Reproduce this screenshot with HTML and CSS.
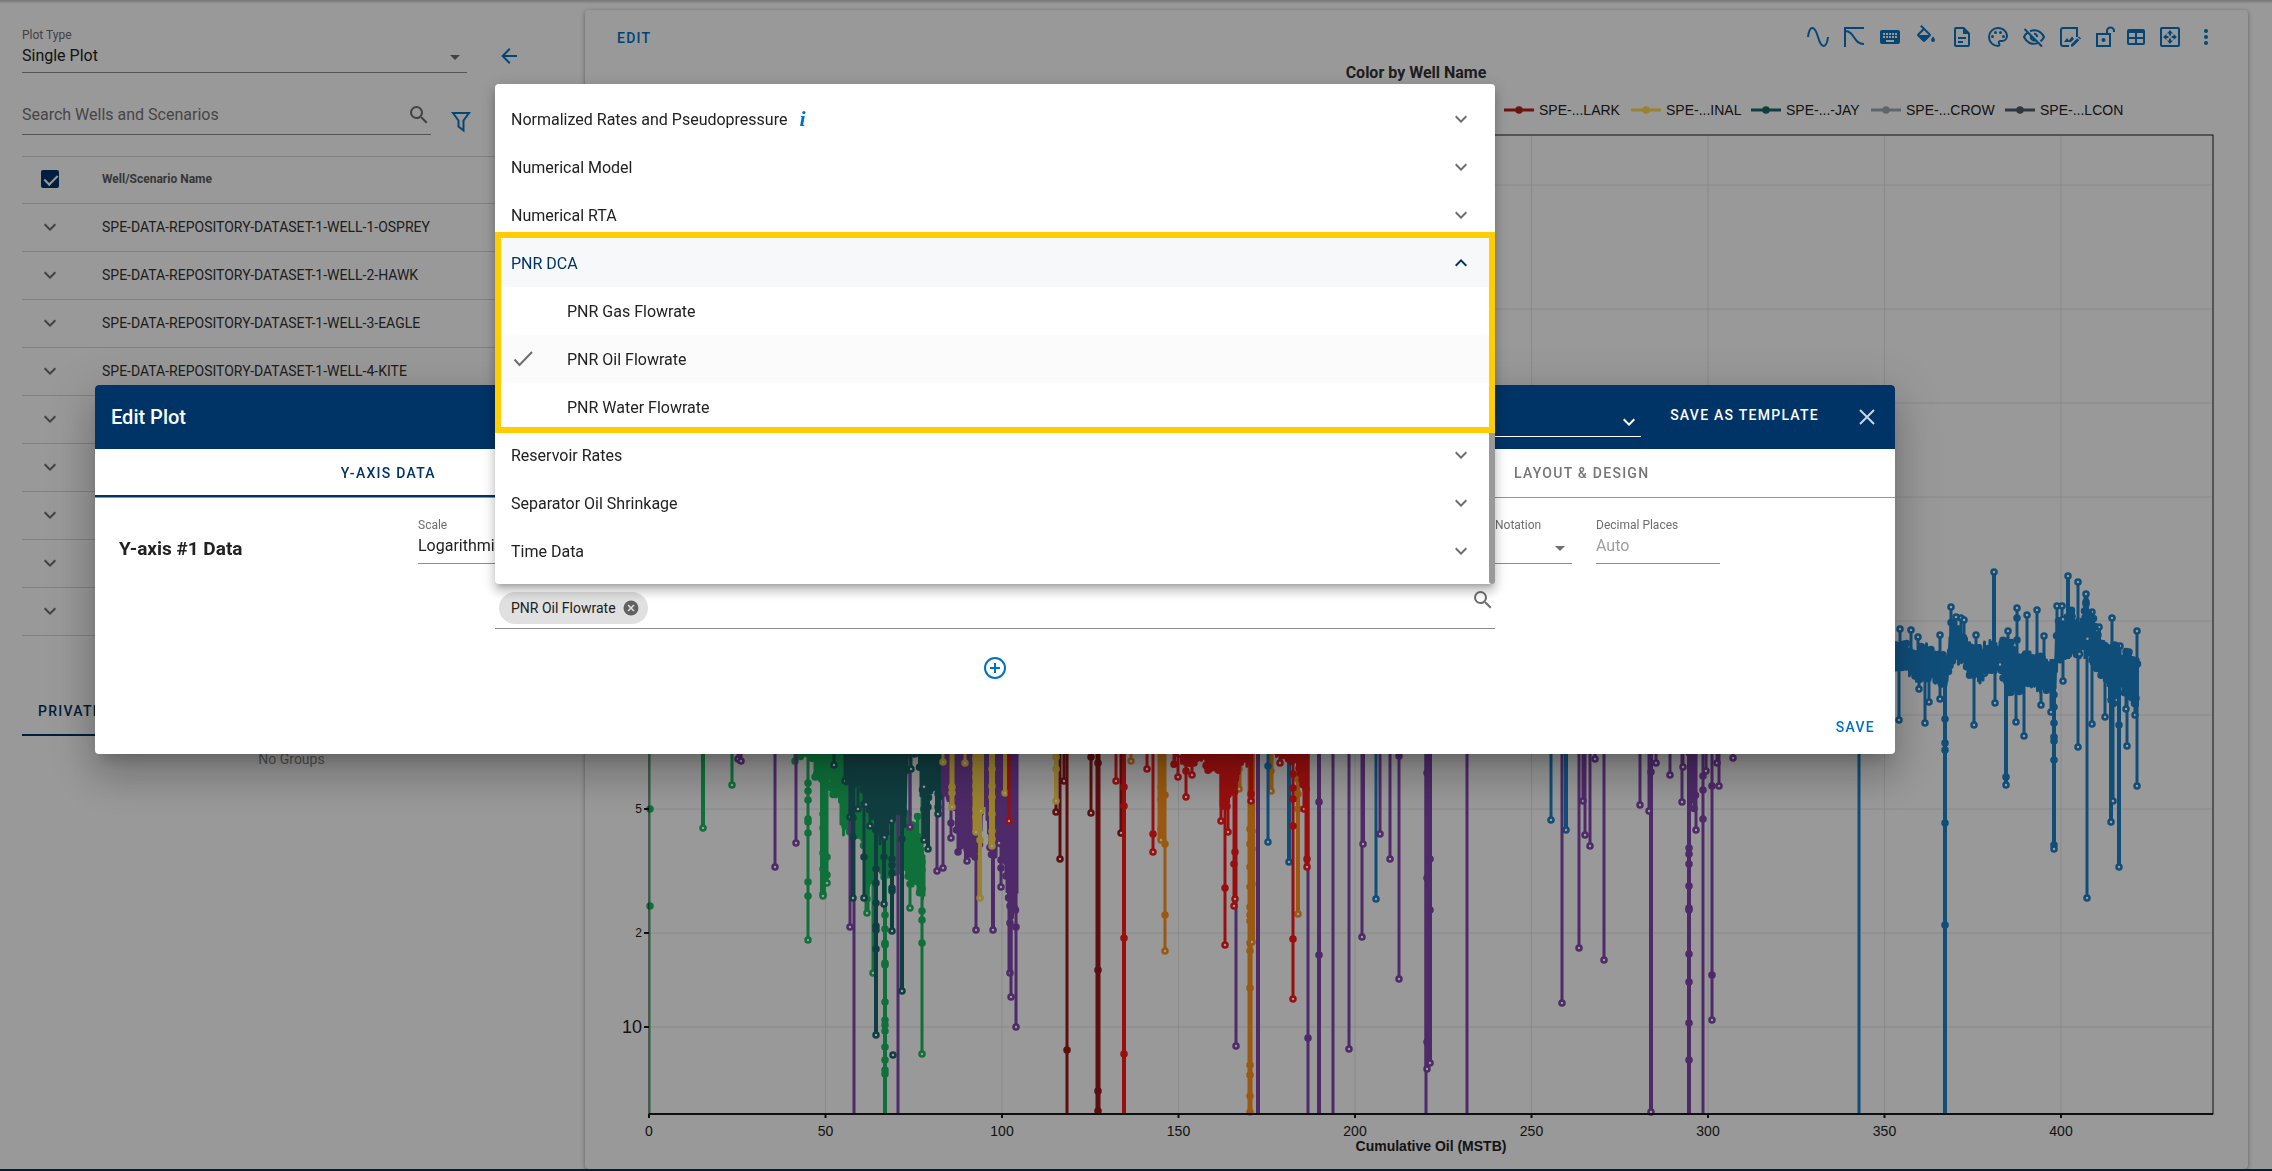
FILE: index.html
```html
<!DOCTYPE html>
<html lang="en">
<head>
  <meta charset="UTF-8" />
  <title>Edit Plot</title>
  <link rel="stylesheet" href="styles.css">
</head>
<body>
  <svg class="sprite" aria-hidden="true">
    <symbol id="chevron" viewBox="0 0 24 24"><path d="M7.4 8.6 12 13.2l4.6-4.6L18 10l-6 6-6-6z" fill="currentColor"/></symbol>
    <symbol id="caret" viewBox="0 0 24 24"><path d="M7 10l5 5 5-5z" fill="currentColor"/></symbol>
    <symbol id="magnify" viewBox="0 0 24 24"><path fill="currentColor" d="M9.5,3A6.5,6.5 0 0,1 16,9.5C16,11.11 15.41,12.59 14.44,13.73L14.71,14H15.5L20.5,19L19,20.5L14,15.5V14.71L13.73,14.44C12.59,15.41 11.11,16 9.5,16A6.5,6.5 0 0,1 3,9.5A6.5,6.5 0 0,1 9.5,3M9.5,5C7,5 5,7 5,9.5C5,12 7,14 9.5,14C12,14 14,12 14,9.5C14,7 12,5 9.5,5Z"/></symbol>
  </svg>

  <div class="page">
    <aside class="sidebar">
      <div class="plot-type">
        <div class="field">
          <label for="plotType">Plot Type</label>
          <select id="plotType"><option>Single Plot</option></select>
          <svg class="caret"><use href="#caret"/></svg>
        </div>
        <button class="icon-btn" aria-label="Back">
          <svg viewBox="0 0 24 24"><path d="M20 11v2H8l5.5 5.5-1.4 1.4L4.2 12l7.9-7.9 1.4 1.4L8 11z" fill="currentColor"/></svg>
        </button>
      </div>

      <div class="search">
        <div class="search-box">
          <input type="text" placeholder="Search Wells and Scenarios" aria-label="Search Wells and Scenarios">
          <svg><use href="#magnify"/></svg>
        </div>
        <button class="icon-btn" aria-label="Filter">
          <svg viewBox="0 0 24 24"><path d="M4 3h16l-5.500 7.500V20.500l-5-4V10.500z" fill="none" stroke="currentColor" stroke-width="2"/></svg>
        </button>
      </div>

      <table class="wells">
        <thead>
          <tr><th class="toggle"><input type="checkbox" checked aria-label="Select all wells"></th><th>Well/Scenario Name</th></tr>
        </thead>
        <tbody id="wells"></tbody>
      </table>

      <div class="groups">
        <button class="tab active">PRIVATE</button>
      </div>
      <p class="no-groups">No Groups</p>
    </aside>

    <main class="card">
      <div class="toolbar">
        <button class="text-btn">EDIT</button>
        <div class="tools">
          <button aria-label="Smooth"><svg viewBox="0 0 24 24"><path d="M2 12C3.500 0 8.500 0 12 12s8.500 12 10 0" fill="none" stroke="currentColor" stroke-width="2"/></svg></button>
          <button aria-label="Type curve"><svg viewBox="0 0 24 24"><path d="M3 22V3h19M3 6c10 0 8 13 19 13" fill="none" stroke="currentColor" stroke-width="2"/></svg></button>
          <button aria-label="Keyboard"><svg viewBox="0 0 24 24"><path fill="currentColor" d="M19,10H17V8H19M19,13H17V11H19M16,10H14V8H16M16,13H14V11H16M16,17H8V15H16M7,10H5V8H7M7,13H5V11H7M8,11H10V13H8M8,8H10V10H8M11,11H13V13H11M11,8H13V10H11M20,5H4C2.890,5 2,5.890 2,7V17A2,2 0 0,0 4,19H20A2,2 0 0,0 22,17V7C22,5.890 21.100,5 20,5Z"/></svg></button>
          <button aria-label="Fill"><svg viewBox="0 0 24 24"><path fill="currentColor" d="M19,11.500C19,11.500 17,13.670 17,15A2,2 0 0,0 19,17A2,2 0 0,0 21,15C21,13.670 19,11.500 19,11.500M5.210,10L10,5.210L14.790,10M16.560,8.940L7.620,0L6.210,1.410L8.590,3.790L3.440,8.940C2.850,9.500 2.850,10.470 3.440,11.060L8.940,16.560C9.230,16.850 9.620,17 10,17C10.380,17 10.770,16.850 11.060,16.560L16.560,11.060C17.150,10.470 17.150,9.500 16.560,8.940Z"/></svg></button>
          <button aria-label="Report"><svg viewBox="0 0 24 24"><path fill="currentColor" d="M6,2A2,2 0 0,0 4,4V20A2,2 0 0,0 6,22H18A2,2 0 0,0 20,20V8L14,2H6M6,4H13V9H18V20H6V4M8,12V14H16V12H8M8,16V18H13V16H8Z"/></svg></button>
          <button aria-label="Colors"><svg viewBox="0 0 24 24"><path fill="currentColor" d="M12,22A10,10 0 0,1 2,12A10,10 0 0,1 12,2C17.5,2 22,6 22,11A6,6 0 0,1 16,17H14.2C13.9,17 13.7,17.2 13.7,17.5C13.7,17.6 13.8,17.7 13.8,17.8C14.2,18.3 14.4,18.9 14.4,19.5C14.5,20.9 13.4,22 12,22M12,4A8,8 0 0,0 4,12A8,8 0 0,0 12,20C12.3,20 12.5,19.8 12.5,19.5C12.5,19.3 12.4,19.2 12.4,19.1C12,18.6 11.8,18.1 11.8,17.5C11.8,16.1 12.9,15 14.3,15H16A4,4 0 0,0 20,11C20,7.1 16.4,4 12,4"/><g fill="currentColor"><circle cx="6.500" cy="11.500" r="1.500"/><circle cx="9.500" cy="7.500" r="1.500"/><circle cx="14.500" cy="7.500" r="1.500"/><circle cx="17.500" cy="11.500" r="1.500"/></g></svg></button>
          <button aria-label="Hide"><svg viewBox="0 0 24 24"><g fill="none" stroke="currentColor" stroke-width="2"><path d="M2.500 4 20 21.500M8 6.300C14 3.800 19.500 6.500 22 12c-.8 1.800-2 3.300-3.500 4.400M16 17.900C10 20.500 4.500 17.500 2 12c.8-1.800 2-3.300 3.500-4.400M9 11a3.200 3.200 0 0 0 4 4.200M12 8.800a3.200 3.200 0 0 1 3.200 3.200"/></g></svg></button>
          <button aria-label="Edit image"><svg viewBox="0 0 24 24"><path d="M11 21H5a2 2 0 0 1-2-2V5a2 2 0 0 1 2-2h14v9" fill="none" stroke="currentColor" stroke-width="2"/><path d="M20 3v9h-1V3zM6 17l3-4 2 2.500 3-4 2 2.500-3 3zM13 19.500l6.200-6.200 2 2L15 21.500h-2zM20 12.500l1-1 2 2-1 1z" fill="currentColor"/></svg></button>
          <button class="narrow" aria-label="Unlock"><svg viewBox="0 0 24 24"><path d="M3 9h13v12H3zM13 9V6a3.500 3.500 0 0 1 7 0v1" fill="none" stroke="currentColor" stroke-width="2"/><circle cx="9.500" cy="15" r="2" fill="currentColor"/></svg></button>
          <button class="narrow" aria-label="Table"><svg viewBox="0 0 24 24"><path fill="currentColor" fill-rule="evenodd" d="M3 4h14a2 2 0 0 1 2 2v12a2 2 0 0 1-2 2H3a2 2 0 0 1-2-2V6a2 2 0 0 1 2-2zM3 8v4h6V8zM11 8v4h6V8zM3 14v4h6v-4zM11 14v4h6v-4z"/></svg></button>
          <button aria-label="Fit"><svg viewBox="0 0 24 24"><rect x="3" y="3" width="18" height="18" rx="1" fill="none" stroke="currentColor" stroke-width="2"/><path fill="currentColor" d="M12 5l3 3.500h-2v2h-2v-2H9zM12 19l-3-3.500h2v-2h2v2h2zM5 12l3.500-3v2h2v2h-2v2zM19 12l-3.500 3v-2h-2v-2h2V9z"/></svg></button>
          <button aria-label="More"><svg viewBox="0 0 24 24"><g fill="currentColor"><circle cx="12" cy="6" r="2"/><circle cx="12" cy="12" r="2"/><circle cx="12" cy="18" r="2"/></g></svg></button>
        </div>
      </div>
      <svg id="chart" class="chart" viewBox="585 61 1663 1108" role="img" aria-label="Rates against cumulative oil"></svg>
    </main>
  </div>
  <footer class="footer"></footer>

  <div class="backdrop"></div>

  <section class="dialog" role="dialog" aria-label="Edit Plot">
    <header class="dialog-head">
      <h2>Edit Plot</h2>
      <div class="template">
        <select aria-label="Template"><option></option></select>
        <svg><use href="#chevron"/></svg>
      </div>
      <button class="template-btn">SAVE AS TEMPLATE</button>
      <button class="close" aria-label="Close">
        <svg viewBox="0 0 24 24"><path d="M5 5l14 14M19 5L5 19" fill="none" stroke="currentColor" stroke-width="2"/></svg>
      </button>
    </header>

    <nav class="tabs">
      <button class="tab active">Y-AXIS DATA</button>
      <button class="tab">X-AXIS DATA</button>
      <button class="tab">LAYOUT &amp; DESIGN</button>
    </nav>

    <div class="axis">
      <h3>Y-axis #1 Data</h3>
      <div class="field grow">
        <label for="scale">Scale</label>
        <select id="scale"><option>Logarithmic</option></select>
      </div>
      <div class="field notation">
        <label for="notation">Notation</label>
        <select id="notation"><option></option></select>
        <svg class="caret"><use href="#caret"/></svg>
      </div>
      <div class="field decimals">
        <label for="decimals">Decimal Places</label>
        <input id="decimals" type="text" placeholder="Auto">
      </div>
    </div>

    <div class="picker">
      <span class="chip">PNR Oil Flowrate
        <button aria-label="Remove"><svg viewBox="0 0 24 24"><circle cx="12" cy="12" r="10" fill="currentColor"/><path d="M8 8l8 8M16 8l-8 8" stroke="#e0e0e0" stroke-width="2"/></svg></button>
      </span>
      <svg class="magnify"><use href="#magnify"/></svg>

      <div class="menu">
        <button class="group">Normalized Rates and Pseudopressure <i class="info">i</i><svg><use href="#chevron"/></svg></button>
        <button class="group">Numerical Model<svg><use href="#chevron"/></svg></button>
        <button class="group">Numerical RTA<svg><use href="#chevron"/></svg></button>
        <button class="group open">PNR DCA<svg><use href="#chevron"/></svg></button>
        <button class="item">PNR Gas Flowrate</button>
        <button class="item selected"><svg viewBox="0 0 24 24"><path d="M3.500 12.500l5 5.500L21 5" fill="none" stroke="currentColor" stroke-width="2"/></svg>PNR Oil Flowrate</button>
        <button class="item">PNR Water Flowrate</button>
        <button class="group">Reservoir Rates<svg><use href="#chevron"/></svg></button>
        <button class="group">Separator Oil Shrinkage<svg><use href="#chevron"/></svg></button>
        <button class="group">Time Data<svg><use href="#chevron"/></svg></button>
        <div class="thumb"></div>
        <div class="highlight"></div>
      </div>
    </div>

    <div class="add-row">
      <button aria-label="Add data">
        <svg viewBox="0 0 24 24"><g fill="none" stroke="currentColor" stroke-width="2"><circle cx="12" cy="12" r="10"/><path d="M12 7v10M7 12h10"/></g></svg>
      </button>
    </div>
    <div class="actions"><button class="text-btn">SAVE</button></div>
  </section>

  <script src="chart.js"></script>
</body>
</html>
```
FILE: styles.css
```css
* {
  box-sizing: border-box;
}

body {
  margin: 0;
  height: 100vh;
  overflow: hidden;
  display: flex;
  flex-direction: column;
  font-family: Roboto, "Liberation Sans", sans-serif;
  font-size: 16px;
  color: #212121;
  background: #fff;
}

button, select, input {
  font: inherit;
  color: inherit;
  background: none;
  border: 0;
  margin: 0;
  padding: 0;
  outline: 0;
}

button {
  cursor: pointer;
}

select {
  appearance: none;
}

svg {
  display: block;
  flex: none;
  width: 24px;
  height: 24px;
}

.sprite {
  display: none;
}

.page {
  flex: 1;
  min-height: 0;
  display: grid;
  grid-template-columns: 585px 1fr;
  padding: 10px 24px 0 0;
  background: linear-gradient(#c4c4c4, #fff 4px);
}

.footer {
  height: 2px;
  background: #003366;
}

.backdrop {
  position: fixed;
  inset: 0;
  background: rgba(0, 0, 0, 0.4);
}

/* sidebar */
.sidebar {
  padding: 17px 0 0 22px;
}

.field {
  position: relative;
  border-bottom: 1px solid #8c8c8c;
}

.field label {
  display: block;
  font-size: 12px;
  line-height: 16px;
  color: #6e6e6e;
}

.field select, .field input {
  display: block;
  width: 100%;
  height: 29px;
  padding-bottom: 4px;
}

.field .caret {
  position: absolute;
  right: 0;
  bottom: 3px;
  color: #6e6e6e;
}

.plot-type {
  display: flex;
  align-items: center;
  gap: 30px;
}

.plot-type .field {
  width: 445px;
}

.plot-type .icon-btn {
  margin-top: 12px;
}

.icon-btn {
  color: #0b76c4;
}

.search {
  display: flex;
  align-items: flex-end;
  gap: 18px;
  margin-top: 24px;
}

.search-box {
  display: flex;
  align-items: center;
  width: 409px;
  height: 38px;
  padding-bottom: 2px;
  border-bottom: 1px solid #8c8c8c;
  color: #6e6e6e;
}

.search-box input {
  flex: 1;
}

.search-box input::placeholder {
  color: #757575;
  opacity: 1;
}

.search .icon-btn {
  padding-bottom: 1px;
}

.wells {
  width: 100%;
  margin-top: 21px;
  border-collapse: collapse;
  font-size: 14px;
  color: #333;
}

.wells tr {
  height: 48px;
  border-top: 1px solid #d8d8d8;
  border-bottom: 1px solid #d8d8d8;
}

.wells thead tr {
  height: 47px;
}

.wells th {
  font-size: 12px;
  text-align: left;
  color: #5c5c5c;
}

.wells th, .wells td {
  padding: 0 0 2px;
}

.wells .toggle {
  width: 80px;
  padding-left: 16px;
}

.wells td svg {
  color: #6e6e6e;
}

.wells input {
  appearance: none;
  display: block;
  position: relative;
  width: 18px;
  height: 18px;
  margin-left: 3px;
  border-radius: 2px;
  background: #003366;
}

.wells input::after {
  content: "";
  position: absolute;
  left: 6px;
  top: 2px;
  width: 6px;
  height: 11px;
  border: solid #fff;
  border-width: 0 2px 2px 0;
  transform: rotate(45deg);
}

.tab, .text-btn, .template-btn {
  font-size: 14px;
  font-weight: 500;
  letter-spacing: 0.09em;
}

.tab {
  color: #757575;
}

.tab.active {
  color: #003366;
  border-bottom: 2px solid #003366;
}

.groups {
  display: flex;
  height: 48px;
  margin-top: 52px;
}

.groups .tab {
  padding: 0 16px;
}

.no-groups {
  margin: 15px 0 0;
  padding-right: 24px;
  text-align: center;
  font-size: 14px;
  color: #8a8a8a;
}

.text-btn {
  color: #0072c6;
}

/* plot card */
.card {
  min-width: 0;
  border-radius: 4px;
  box-shadow: 0 1px 4px rgba(0, 0, 0, 0.4);
}

.toolbar {
  display: flex;
  justify-content: space-between;
  align-items: center;
  height: 50px;
  padding: 4px 30px 0 32px;
}

.toolbar .text-btn {
  padding-top: 2px;
}

.tools {
  display: flex;
  gap: 12px;
  color: #0b76c4;
}

.tools .narrow {
  width: 20px;
}

.chart {
  width: 100%;
  height: auto;
  font-family: "Liberation Sans", Arial, sans-serif;
  font-size: 14px;
  fill: #222;
}

.chart .title {
  font-family: Roboto, sans-serif;
  font-size: 16px;
  font-weight: 700;
  fill: #333;
}

.chart .axis-title {
  font-weight: 700;
}

.chart .major {
  font-size: 18px;
}

.chart .minor {
  font-size: 12px;
}

/* dialog */
.dialog {
  position: absolute;
  left: 95px;
  right: 377px;
  top: 385px;
  border-radius: 4px;
  background: #fff;
  box-shadow: 0 11px 15px -7px rgba(0, 0, 0, 0.2), 0 24px 38px 3px rgba(0, 0, 0, 0.14), 0 9px 46px 8px rgba(0, 0, 0, 0.12);
}

.dialog-head {
  display: flex;
  align-items: center;
  height: 64px;
  padding: 0 16px;
  border-radius: 4px 4px 0 0;
  background: #003366;
  color: #fff;
}

.dialog-head h2 {
  flex: 1;
  margin: 0;
  font-size: 20px;
  font-weight: 500;
}

.template {
  display: flex;
  align-items: flex-end;
  width: 400px;
  height: 40px;
  padding-bottom: 2px;
  border-bottom: 1px solid #fff;
}

.template select {
  flex: 1;
}

.template-btn {
  margin: 0 36px 4px 29px;
}

.template-btn, .close {
  white-space: nowrap;
}

.close {
  color: #ccd6e0;
}

.tabs {
  display: flex;
  height: 49px;
  border-bottom: 1px solid #949494;
}

.tabs .tab {
  flex: 1 1 auto;
  padding: 2px 16px 0;
  border-bottom: 2px solid transparent;
}

.tabs .tab.active {
  border-color: #003366;
}

.axis {
  display: flex;
  gap: 24px;
  padding: 19px 175px 0 24px;
}

.axis h3 {
  width: 275px;
  margin: 20px 0 0;
  font-size: 19px;
  line-height: 24px;
  font-weight: 700;
}

.field.grow {
  flex: 1;
}

.field.notation {
  width: 77px;
}

.field.decimals {
  width: 124px;
}

.axis .field select, .axis .field input {
  height: 30px;
  padding-bottom: 5px;
}

.decimals input::placeholder {
  color: #9e9e9e;
  opacity: 1;
}

.picker {
  position: relative;
  display: flex;
  align-items: flex-start;
  justify-content: space-between;
  height: 45px;
  margin: 20px 400px 0;
  padding: 8px 0 0 4px;
  border-bottom: 1px solid #8c8c8c;
}

.chip {
  display: flex;
  align-items: center;
  gap: 6px;
  height: 32px;
  padding: 0 8px 0 12px;
  border-radius: 16px;
  font-size: 14px;
  background: #e0e0e0;
}

.chip svg {
  width: 18px;
  height: 18px;
  color: #616161;
}

.magnify {
  margin-top: -4px;
  color: #6e6e6e;
}

.add-row {
  display: flex;
  justify-content: center;
  padding: 27px 0 0;
  color: #0072c6;
}

.actions {
  display: flex;
  justify-content: flex-end;
  padding: 29px 20px 9px;
}

.actions .text-btn {
  height: 36px;
}

.menu {
  position: absolute;
  left: 0;
  right: 0;
  bottom: 100%;
  padding: 11px 0 9px;
  border-radius: 4px;
  background: #fff;
  box-shadow: 0 5px 5px -3px rgba(0, 0, 0, 0.2), 0 8px 10px 1px rgba(0, 0, 0, 0.14), 0 3px 14px 2px rgba(0, 0, 0, 0.12);
}

.menu button {
  display: flex;
  align-items: center;
  width: 100%;
  height: 48px;
  padding: 0 22px 0 16px;
}

.menu .group svg {
  margin-left: auto;
  color: #6e6e6e;
}

.menu .group.open {
  color: #003366;
  background: #f6f8fa;
}

.menu .group.open svg {
  color: #003366;
  transform: rotate(180deg);
}

.menu .item {
  padding-left: 72px;
}

.menu .item.selected {
  gap: 32px;
  padding-left: 16px;
  background: #fbfbfb;
}

.menu .item svg {
  color: #6e6e6e;
}

.info {
  margin-left: 12px;
  font: italic bold 22px "Liberation Serif", serif;
  color: #0072c6;
}

.thumb {
  position: absolute;
  right: 0;
  top: 180px;
  bottom: 0;
  width: 6px;
  border-radius: 3px;
  background: #999;
}

.highlight {
  position: absolute;
  left: 0;
  right: 0;
  top: 148px;
  height: 201px;
  border: 6px solid #ffcd00;
}
```
FILE: chart.js
```js
const wells = ["1-OSPREY", "2-HAWK", "3-EAGLE", "4-KITE", "", "", "", "", ""];
document.getElementById("wells").innerHTML = wells.map(name =>
  `<tr><td class="toggle"><svg><use href="#chevron"/></svg></td><td>${name ? "SPE-DATA-REPOSITORY-DATASET-1-WELL-" + name : ""}</td></tr>`
).join("");

const C = {
  green: "#19bb62", purple: "#8246b0", teal: "#1b686b", yellow: "#ffdb4d",
  red: "#ff1a1a", dark: "#9b1818", orange: "#ff951c", blue: "#1c82cc"
};
const LEFT = 649, RIGHT = 2213, TOP = 136, BOTTOM = 1115;
let out = "";

// same noise on every load
let seed = 7;
function rnd() {
  seed = (seed * 16807) % 2147483647;
  return seed / 2147483647;
}

function line(x1, y1, x2, y2, color, width) {
  out += `<line x1="${x1}" y1="${y1}" x2="${x2}" y2="${y2}" stroke="${color}" stroke-width="${width}"/>`;
}

function text(x, y, str, cls, anchor) {
  out += `<text x="${x}" y="${y}" class="${cls}" text-anchor="${anchor}">${str}</text>`;
}

function dot(x, y, color, full) {
  out += `<circle cx="${x}" cy="${y}" r="2.5" fill="${full ? color : "#fff"}" stroke="${color}" stroke-width="2.500"/>`;
}

// each stem: [x, end y, width, y of the filled points on the way]
function stems(color, from, list) {
  for (const [x, y, width, points] of list) {
    line(x, from, x, y, C[color], width || 3);
    (points || []).forEach(p => dot(x, p, C[color], true));
    if (y < BOTTOM) dot(x, y, C[color]);
  }
}

// dense noise between two edges: [x, top, bottom]
function band(color, edge, jitter) {
  let d = "", dots = [];
  for (let i = 0; i < edge.length - 1; i++) {
    const [x1, t1, b1] = edge[i], [x2, t2, b2] = edge[i + 1];
    for (let x = x1; x < x2; x += 1.5) {
      const k = (x - x1) / (x2 - x1);
      const t = t1 + (t2 - t1) * k + rnd() * jitter;
      const b = b1 + (b2 - b1) * k - rnd() * jitter;
      d += `${d ? "L" : "M"}${x} ${t.toFixed(1)}L${x} ${b.toFixed(1)}`;
      if (rnd() < 0.4) dots.push([x, t]);
      if (rnd() < 0.5) dots.push([x, b]);
    }
  }
  out += `<path d="${d}" fill="none" stroke="${C[color]}" stroke-width="3" stroke-linejoin="round"/>`;
  dots.forEach(p => dot(p[0], p[1].toFixed(1), C[color], rnd() < 0.92));
}

// grid and axes
for (let v = 50; v <= 400; v += 50) line(LEFT + v * 3.53, TOP, LEFT + v * 3.53, BOTTOM, "#e6e6e6", 1);
[186, 310, 404, 498, 622, 716, 810, 934, 1028].forEach(y => line(LEFT, y, RIGHT, y, "#e6e6e6", 1));

stems("green", 740, [
  [703, 829, 4], [732, 786], [808, 941, 3, [784, 792, 801, 820, 823, 834, 883, 897]],
  [823, 897, 6, [815, 829, 854, 870, 895]], [827, 884, 3, [858, 876]], [867, 914, 5, [870, 885, 900]],
  [873, 974], [885, 1115, 4, [916, 930, 944, 946, 964, 966, 1003, 1021, 1026, 1032, 1048, 1061, 1071, 1075]],
  [910, 909, 3, [885]], [922, 1055, 3, [863, 871, 890, 912, 921, 944]]
]);
dot(650, 810, C.green, true);
dot(650, 907, C.green, true);
band("green", [[795, 740, 775], [799, 740, 758], [812, 740, 760], [815, 740, 782], [830, 740, 790], [838, 740, 805], [842, 740, 836], [862, 740, 842], [868, 740, 900], [875, 740, 860], [885, 740, 885], [898, 740, 875], [905, 815, 870], [910, 815, 885], [918, 817, 895], [925, 850, 905]], 14);

stems("purple", 740, [
  [738, 760], [741, 762], [775, 868], [796, 844], [850, 928], [854, 1115], [898, 1115], [910, 828],
  [937, 872], [943, 869], [951, 839, 3, [824]], [976, 931], [993, 931, 4], [967, 862], [1001, 888, 3, [861, 869]],
  [1010, 974, 5, [924]], [1011, 998], [1016, 1028, 3, [928]]
]);
band("purple", [[930, 740, 775], [945, 740, 805], [955, 740, 810], [958, 740, 855], [975, 740, 868], [978, 740, 865], [984, 740, 800], [990, 740, 855], [1003, 740, 862], [1007, 740, 895], [1011, 740, 925], [1018, 740, 905]], 16);

stems("teal", 740, [
  [834, 766], [845, 782], [850, 818], [853, 899, 4, [819, 838]], [858, 810], [864, 899, 3, [805, 858]],
  [870, 827], [876, 1036, 4, [870, 884, 904, 927, 931, 950]], [884, 905, 4, [858]],
  [892, 932, 4, [860, 866, 874, 889, 892]], [902, 992, 4, [840]], [911, 770], [924, 841, 5, [810]],
  [928, 850, 4, [808]], [938, 815, 6, [795, 808]]
]);
dot(893, 1056, C.teal);
band("teal", [[846, 740, 785], [860, 740, 788], [868, 740, 812], [880, 740, 845], [890, 740, 830], [896, 740, 818], [905, 740, 828], [907, 740, 760], [918, 740, 760], [921, 740, 800], [940, 740, 800]], 14);

stems("yellow", 740, [
  [943, 763], [952, 808, 5, [788, 794]], [965, 764], [980, 899, 4, [841]],
  [976, 833, 7, [760, 770, 778, 787, 795, 810, 818]], [981, 812, 6], [992, 847, 6, [770, 787, 798, 815, 832, 840]],
  [1005, 794, 4]
]);
stems("red", 740, [[1009, 822]]);

stems("dark", 740, [
  [1056, 813], [1060, 860], [1064, 782], [1067, 1115, 3, [1051]], [1091, 814, 3, [758]],
  [1098, 1115, 5, [764, 971, 1092, 1112]], [1121, 834]
]);
stems("yellow", 740, [[1056, 802, 4, [758, 770]]]);
stems("orange", 740, [
  [1131, 762], [1165, 952, 3, [796, 845, 916]], [1161, 841, 7, [788, 800, 830]], [1239, 790, 5, [770]],
  [1250, 1115, 5, [830, 845, 868, 888, 908, 916, 922, 944, 952, 989, 1066, 1076, 1097, 1113]],
  [1252, 943, 6, [832, 850, 885]], [1271, 792, 5, [772]], [1298, 915, 4, [780, 795, 810]]
]);
stems("blue", 740, [[1268, 843, 3, [767]], [1289, 863, 4], [1376, 900], [1551, 821], [1566, 831, 4]]);
stems("purple", 740, [
  [1236, 1047], [1258, 1115, 4], [1308, 1115, 3, [1039]], [1319, 1115, 4, [803, 956]], [1333, 1115],
  [1349, 1050], [1362, 938], [1363, 845, 4], [1380, 835], [1390, 860], [1399, 980, 3, [757]],
  [1426, 1115], [1427, 1070, 5, [774, 879, 1043]], [1430, 1064, 4, [860, 911]], [1467, 1115],
  [1562, 1004], [1579, 949], [1583, 802], [1585, 836], [1590, 847], [1595, 760], [1604, 961],
  [1640, 806], [1651, 1113, 4, [773]], [1649, 812], [1656, 764], [1670, 776], [1682, 803], [1683, 768],
  [1689, 1115, 4, [849, 855, 865, 887, 909, 911, 955, 983, 1024, 1061]], [1696, 831],
  [1703, 1115, 3, [777, 791, 820]], [1706, 772], [1712, 1021, 3, [787, 976]], [1717, 764], [1719, 787], [1733, 759]
]);
band("purple", [[1689, 740, 820], [1694, 740, 820], [1697, 740, 775]], 20);
stems("red", 740, [
  [1116, 782], [1124, 1115, 4, [788, 807, 939, 1055]], [1147, 770], [1153, 853, 3, [835]], [1178, 778],
  [1186, 798, 3, [772]], [1192, 776], [1225, 946, 3, [889]], [1221, 822], [1228, 833], [1234, 907, 3, [865]],
  [1235, 900, 4, [853]], [1251, 802, 5, [795]], [1280, 764], [1293, 1000, 3, [775, 789, 800, 827, 940]],
  [1304, 810], [1307, 868, 5, [860]]
]);
band("red", [[1174, 740, 766], [1188, 740, 768], [1203, 740, 762], [1208, 740, 778], [1220, 740, 778], [1221, 740, 815], [1236, 740, 800], [1241, 740, 762], [1250, 740, 770]], 12);
band("red", [[1275, 740, 760], [1290, 740, 762], [1296, 740, 765], [1303, 740, 790], [1307, 740, 800]], 10);

// right hand cluster
stems("blue", 660, [
  [1859, 1115], [1899, 721], [1925, 724], [1929, 703], [1940, 700],
  [1945, 1115, 4, [720, 744, 751, 824, 926]], [1919, 690], [1974, 726], [1995, 704], [2006, 786, 4, [778]],
  [2016, 723], [2024, 737], [2041, 706], [2051, 713], [2054, 850, 4, [708, 724, 738, 742, 761, 846]],
  [2063, 682], [2078, 748], [2087, 899], [2092, 725], [2105, 718], [2111, 823, 4], [2113, 802],
  [2119, 868, 4, [726]], [2127, 747], [2126, 710], [2135, 716], [2137, 787],
  [1900, 630], [1911, 631], [1918, 638], [1940, 636], [1951, 608], [1956, 618], [1961, 619], [1964, 621],
  [1976, 636], [1994, 573, 4], [2008, 632], [2017, 609, 3, [619, 641]], [2027, 616], [2037, 611], [2044, 637],
  [2057, 607], [2062, 607], [2068, 577, 4], [2078, 583], [2086, 595, 5, [605]], [2092, 613], [2099, 628],
  [2112, 619], [2120, 647], [2129, 653], [2137, 632]
]);
band("blue", [[1890, 643, 668], [1905, 643, 672], [1915, 648, 686], [1925, 643, 682], [1940, 652, 688], [1947, 655, 690], [1951, 622, 668], [1962, 628, 665], [1968, 642, 675], [1980, 645, 688], [1990, 640, 675], [2000, 642, 675], [2008, 637, 694], [2015, 652, 696], [2030, 650, 690], [2045, 658, 695], [2055, 668, 698], [2057, 620, 665], [2064, 612, 662], [2072, 610, 652], [2080, 622, 660], [2086, 600, 645], [2095, 622, 670], [2105, 643, 682], [2112, 640, 712], [2120, 652, 695], [2128, 650, 695], [2133, 655, 705], [2138, 665, 708]], 10);

// frame, ticks and labels
out += `<rect x="${LEFT}" y="${TOP}" width="${RIGHT - LEFT}" height="${BOTTOM - TOP}" fill="none" stroke="#1a1a1a"/>`;
line(650, TOP, 650, BOTTOM, C.green, 1);
line(LEFT, BOTTOM, RIGHT, BOTTOM, "#1a1a1a", 2);
for (let v = 0; v <= 400; v += 50) {
  line(LEFT + v * 3.53, BOTTOM, LEFT + v * 3.53, BOTTOM + 4, "#1a1a1a", 2);
  text(LEFT + v * 3.53, 1137, v, "tick", "middle");
}
[[810, "5", "minor"], [934, "2", "minor"], [1028, "10", "major"]].forEach(([y, label, cls]) => {
  line(644, y, LEFT, y, "#1a1a1a", 2);
  text(642, y + (cls === "major" ? 6 : 4), label, cls, "end");
});
text(1431, 1152, "Cumulative Oil (MSTB)", "axis-title", "middle");
text(1416, 79, "Color by Well Name", "title", "middle");

// legend
[[1504, "LARK", "#b51f1f"], [1631, "INAL", C.yellow], [1751, "-JAY", C.teal], [1871, "CROW", "#9aabb5"], [2005, "LCON", "#505c66"]].forEach(([x, name, color]) => {
  line(x, 111, x + 30, 111, color, 3);
  dot(x + 15, 111, color, true);
  text(x + 35, 116, "SPE-..." + name, "legend", "start");
});

document.getElementById("chart").innerHTML = out;
```
